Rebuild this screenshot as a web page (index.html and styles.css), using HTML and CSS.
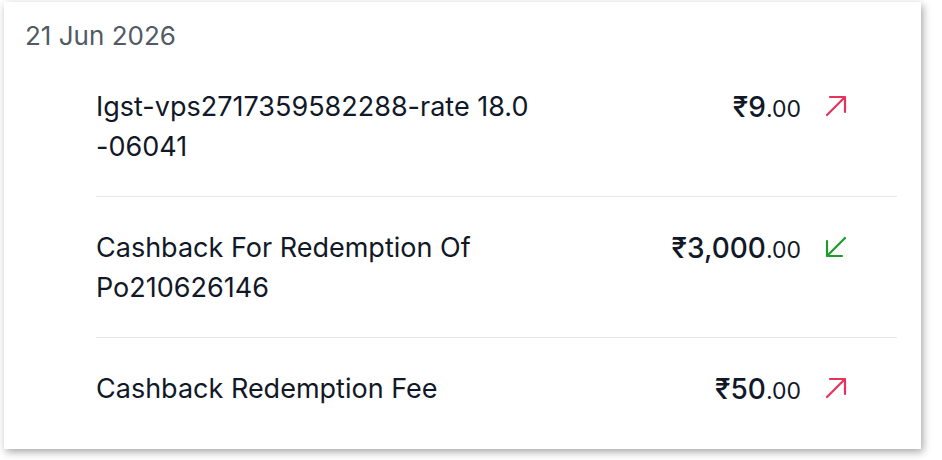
FILE: index.html
```html
<!DOCTYPE html>
<html>
<head>
<meta charset="utf-8">
<link rel="stylesheet" href="styles.css">
</head>
<body>
<div class="card">
  <div class="date">21 Jun 2026</div>
  <ul class="list">
    <li class="row">
      <div class="title">Igst-vps2717359582288-rate 18.0 -06041</div>
      <div class="amount"><span class="main">₹9</span><span class="dec">.00</span></div>
      <svg class="icon debit" viewBox="0 0 22 22"><path d="M2 20L20 2M5 2h15v15"/></svg>
    </li>
    <li class="row">
      <div class="title">Cashback For Redemption Of Po210626146</div>
      <div class="amount"><span class="main">₹3,000</span><span class="dec">.00</span></div>
      <svg class="icon credit" viewBox="0 0 22 22"><path d="M20 2L2 20M2 5v15h15"/></svg>
    </li>
    <li class="row">
      <div class="title">Cashback Redemption Fee</div>
      <div class="amount"><span class="main">₹50</span><span class="dec">.00</span></div>
      <svg class="icon debit" viewBox="0 0 22 22"><path d="M2 20L20 2M5 2h15v15"/></svg>
    </li>
  </ul>
</div>
</body>
</html>
```
FILE: styles.css
```css
html, body {
  margin: 0;
  padding: 0;
  background: #ffffff;
}
body {
  padding: 2px 21px 11px 4px;
  font-family: Inter, "Noto Sans", sans-serif;
  color: #111827;
}
.card {
  background: #fff;
  box-shadow: 2px 3px 8px rgba(0, 0, 0, 0.35);
  padding: 14px 24px 11px 21px;
  height: 447px;
  box-sizing: border-box;
}
.date {
  font-size: 26px;
  line-height: 40px;
  color: #525a66;
}
.list {
  list-style: none;
  margin: 0 0 0 71px;
  padding: 0;
}
.row {
  display: flex;
  align-items: flex-start;
  padding: 31px 0 29px;
  border-top: 1px solid #e5e7eb;
}
.row:first-child {
  border-top: none;
}
.title {
  flex: 1;
  max-width: 460px;
  font-size: 27px;
  line-height: 40px;
  margin-right: auto;
}
.amount {
  font-size: 28px;
  line-height: 40px;
  font-weight: 500;
  white-space: nowrap;
}
.dec {
  font-size: 23px;
  font-weight: 400;
}
.icon {
  flex: none;
  width: 22px;
  height: 22px;
  margin: 8px 50px 0 24px;
  fill: none;
  stroke-width: 2.2;
  stroke-linecap: round;
  stroke-linejoin: round;
}
.debit { stroke: #e5345b; }
.credit { stroke: #1f9a2c; }
```
